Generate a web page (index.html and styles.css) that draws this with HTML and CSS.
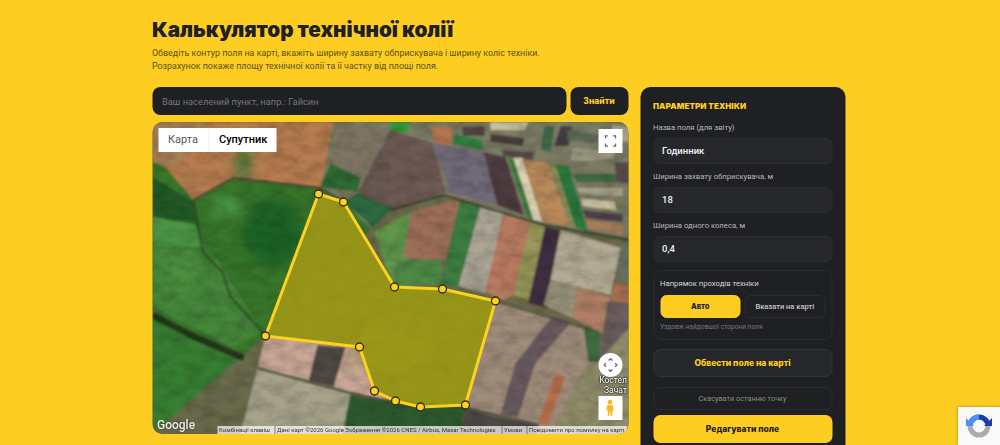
FILE: index.html
```html
<!DOCTYPE html>
<html lang="uk">

<head>
    <meta charset="UTF-8">
    <meta name="viewport" content="width=device-width, initial-scale=1.0">
    <title>Калькулятор технічної колії</title>
    <link rel="stylesheet" href="styles.css">
</head>

<body>
    <div class="page">
        <h1>Калькулятор технічної колії</h1>
        <p class="intro">Обведіть контур поля на карті, вкажіть ширину захвату обприскувача і ширину коліс техніки.<br>Розрахунок покаже площу технічної колії та її частку від площі поля.</p>

        <div class="layout">
            <div class="left-col">
                <div class="search-row">
                    <input class="search-input" type="text" placeholder="Ваш населений пункт, напр.: Гайсин">
                    <button class="search-btn">Знайти</button>
                </div>

                <div class="map">
                    <svg class="map-canvas" viewBox="0 0 477 312" width="477" height="312">
                        <defs>
                            <filter id="soft"><feGaussianBlur stdDeviation="1" /></filter>
                            <filter id="mottle" x="-20%" y="-20%" width="140%" height="140%"><feGaussianBlur stdDeviation="6" /></filter>
                            <filter id="grain" x="0" y="0" width="100%" height="100%">
                                <feTurbulence type="fractalNoise" baseFrequency="0.06 0.1" numOctaves="4" seed="7" />
                                <feColorMatrix type="matrix" values="0 0 0 0 0  0 0 0 0 0  0 0 0 0 0  1.6 0 0 0 -0.55" />
                            </filter>
                        </defs>
                        <g filter="url(#soft)">
                            <rect width="477" height="312" fill="#7d7a62" />
                            <!-- top left -->
                            <polygon points="0,0 181,0 168,66 81,56 41,78 13,45 0,40" fill="#b67c50" />
                            <polygon points="0,0 60,0 30,40 13,45 0,40" fill="#a88058" />
                            <polygon points="181,41 188,0 238,0 215,55" fill="#7f7465" />
                            <polygon points="168,65 178,41 208,56 205,70" fill="#2f6a32" />
                            <polygon points="205,71 238,8 280,21 293,70 245,88 215,100" fill="#6b5853" />
                            <polygon points="191,80 205,71 245,88 222,110 215,100" fill="#2e6a42" />
                            <!-- green block on the left -->
                            <polygon points="0,40 13,45 41,78 81,56 168,66 191,80 222,110 113,214 105,246 88,312 0,312" fill="#38762c" />
                            <polygon points="0,55 41,80 44,100 0,95" fill="#245a28" />
                            <polygon points="0,95 44,103 50,125 0,125" fill="#4c9444" />
                            <polygon points="0,125 60,130 110,210 80,225 0,185" fill="#44863a" />
                            <polygon points="0,198 95,240 88,312 0,312" fill="#387e30" />
                            <!-- strips of small plots along the top -->
                            <polygon points="188,0 477,0 477,22 420,40 353,35 280,21 238,8" fill="#7c7d65" />
                            <polygon points="238,0 258,0 254,12 238,8" fill="#2f9a3a" />
                            <polygon points="278,5 300,5 298,24 282,21" fill="#b5754f" />
                            <polygon points="310,5 332,4 332,14 310,14" fill="#55453f" />
                            <polygon points="338,0 376,0 372,8 338,8" fill="#c8bfa0" />
                            <polygon points="302,12 330,18 330,28 300,22" fill="#2e8040" />
                            <polygon points="338,12 372,16 370,24 338,20" fill="#4a3c3e" />
                            <polygon points="350,28 382,30 380,38 350,34" fill="#5b4a48" />
                            <polygon points="392,4 402,4 398,30 388,28" fill="#3e6a4a" />
                            <polygon points="408,4 420,4 416,24 402,24" fill="#4a3c44" />
                            <polygon points="415,8 458,14 456,22 415,18" fill="#5b6a56" />
                            <polygon points="420,26 462,30 460,42 418,38" fill="#9c9a82" />
                            <polygon points="460,2 477,6 477,20 458,18" fill="#ada68c" />
                            <!-- big fields in the middle -->
                            <polygon points="238,8 280,21 293,70 245,88 238,86" fill="#6e5a52" />
                            <polygon points="280,21 331,30 345,83 298,71" fill="#6f6b79" />
                            <polygon points="331,30 353,35 371,93 345,83" fill="#4f3d40" />
                            <polygon points="355,35 361,36 381,98 375,95" fill="#3a7f3f" />
                            <polygon points="361,36 370,36 390,100 381,98" fill="#dcd2b2" />
                            <polygon points="370,38 395,41 418,105 390,100" fill="#b98a5a" />
                            <polygon points="395,41 405,43 423,105 418,105" fill="#8a8a5a" />
                            <polygon points="403,43 416,43 436,111 423,105" fill="#2b7a3e" />
                            <!-- plots on the right edge -->
                            <polygon points="416,40 477,36 477,118 436,111" fill="#7a7c62" />
                            <polygon points="420,52 470,52 472,60 424,60" fill="#3f6d45" />
                            <polygon points="424,66 470,66 470,74 428,72" fill="#a8a186" />
                            <polygon points="428,76 462,80 464,88 430,84" fill="#c9c0a0" />
                            <polygon points="430,88 470,92 470,100 434,96" fill="#4d3f4a" />
                            <polygon points="432,97 470,103 470,112 436,106" fill="#a87c58" />
                            <polygon points="462,40 477,40 477,62 464,60" fill="#5a4c48" />
                            <!-- below the road -->
                            <polygon points="238,88 291,73 391,103 478,118 478,312 0,312 113,214" fill="#6b6a4c" />
                            <polygon points="222,110 258,91 258,165 240,165" fill="#5f9648" />
                            <polygon points="258,91 308,76 293,138 251,136" fill="#9d6f58" />
                            <polygon points="245,138 290,138 288,163 240,163" fill="#4f8a44" />
                            <polygon points="308,78 328,84 306,165 288,163" fill="#3d7d42" />
                            <polygon points="328,84 351,91 333,171 306,164" fill="#aba595" />
                            <polygon points="351,91 378,99 361,173 351,178 333,170" fill="#b77a5e" />
                            <polygon points="378,99 393,104 376,178 361,173" fill="#98985a" />
                            <polygon points="393,104 408,108 395,186 376,181" fill="#3f2f3f" />
                            <polygon points="408,108 468,126 458,173 425,165 398,158" fill="#b2aa92" />
                            <polygon points="398,158 425,165 420,196 391,183" fill="#97937a" />
                            <polygon points="425,165 458,175 450,211 420,196" fill="#b07f66" />
                            <polygon points="468,126 477,120 477,160 462,160" fill="#69705f" />
                            <polygon points="462,160 477,165 477,182 458,178" fill="#aa7050" />
                            <polygon points="455,180 477,181 477,235 447,235" fill="#6c6061" />
                            <!-- bottom right -->
                            <polygon points="343,179 438,208 445,240 431,248 398,312 308,312 313,283" fill="#a08c7a" />
                            <polygon points="401,193 418,201 383,241 365,296 348,293 363,241" fill="#6a5a60" />
                            <polygon points="403,251 413,255 395,303 386,301" fill="#b56e4a" />
                            <polygon points="431,205 447,209 447,240 436,240" fill="#3f6a40" />
                            <polygon points="445,240 477,205 477,312 398,312 431,248" fill="#8f8c6a" />
                            <!-- bottom left -->
                            <polygon points="113,214 207,225 222,269 238,278 198,271 156,260 105,246" fill="#c8a794" />
                            <polygon points="165,223 193,225 181,265 156,260" fill="#4f4a42" />
                            <polygon points="105,246 198,271 190,312 88,312" fill="#a6a38a" />
                            <polygon points="198,273 241,281 313,286 308,312 190,312" fill="#2e5a2e" />
                            <polygon points="313,286 338,293 386,303 386,312 308,312" fill="#4f4a45" />
                            <!-- field under the contour -->
                            <polygon points="166,72 191,80 242,165 290,167 343,179 313,283 268,285 243,279 222,269 207,225 113,214" fill="#5b6a1e" />
                        </g>
                        <!-- soft patches inside the crops -->
                        <g filter="url(#mottle)">
                            <ellipse cx="91" cy="41" rx="8" ry="18" fill="#4f7a3a" />
                            <ellipse cx="120" cy="110" rx="30" ry="34" fill="#1f6428" />
                            <ellipse cx="75" cy="85" rx="18" ry="10" fill="#4c9644" />
                            <ellipse cx="30" cy="150" rx="14" ry="26" fill="#4c9040" />
                            <ellipse cx="240" cy="225" rx="40" ry="26" fill="#6f7a22" opacity="0.5" />
                        </g>
                        <!-- hedges and roads -->
                        <g filter="url(#soft)">
                            <polyline class="hedge-wide" points="0,193 40,214 91,236" />
                            <polyline class="hedge" points="41,78 81,56 168,66 191,80" />
                            <polyline class="hedge" points="48,118 50,130 70,150 78,175 112,212" />
                            <polyline class="hedge" points="41,78 48,118" />
                            <polyline class="hedge" points="238,88 291,73 391,103 478,118" />
                            <polyline class="hedge" points="105,246 198,271 241,281 313,286 386,303" />
                            <polyline class="hedge-thin" points="343,179 438,208" />
                        </g>
                        <rect width="477" height="312" filter="url(#grain)" opacity="0.2" />

                        <polygon class="contour" points="166,72 191,80 242,165 290,167 343,179 313,283 268,285 243,279 222,269 207,225 113,214" />
                        <g class="vertices">
                            <circle cx="166" cy="72" r="4" />
                            <circle cx="191" cy="80" r="4" />
                            <circle cx="242" cy="165" r="4" />
                            <circle cx="290" cy="167" r="4" />
                            <circle cx="343" cy="179" r="4" />
                            <circle cx="313" cy="283" r="4" />
                            <circle cx="268" cy="285" r="4" />
                            <circle cx="243" cy="279" r="4" />
                            <circle cx="222" cy="269" r="4" />
                            <circle cx="207" cy="225" r="4" />
                            <circle cx="113" cy="214" r="4" />
                        </g>
                    </svg>

                    <div class="map-type">
                        <span class="map-type-item">Карта</span>
                        <span class="map-type-item active">Супутник</span>
                    </div>

                    <div class="fullscreen">
                        <svg viewBox="0 0 14 14" width="12" height="12">
                            <path d="M1 4V1h3M10 1h3v3M13 10v3h-3M4 13H1v-3" fill="none" stroke="#666" stroke-width="1.7" />
                        </svg>
                    </div>

                    <div class="camera">
                        <svg viewBox="0 0 24 24" width="18" height="18">
                            <path d="M9.5 6 12 3.500 14.500 6M9.500 18l2.500 2.500 2.500-2.500M6 9.500 3.500 12 6 14.500M18 9.500l2.500 2.500-2.500 2.500" fill="none" stroke="#666" stroke-width="1.7" />
                        </svg>
                    </div>

                    <div class="place-label">Костел<br>Зачат</div>

                    <div class="pegman">
                        <svg viewBox="0 0 14 22" width="11" height="18">
                            <circle cx="7" cy="3.6" r="3" fill="#f5b91e" />
                            <path d="M3.4 7.4h7.2l1.2 6.6h-1.7v7H7.7v-5H6.3v5H4.100v-7H2.200z" fill="#f5b91e" />
                        </svg>
                    </div>

                    <div class="google-logo">Google</div>

                    <div class="attribution">
                        <span class="attr-item attr-keys">Комбінації клавіш</span>
                        <span class="attr-item attr-data">Дані карт ©2026 Google Зображення ©2026 CNES / Airbus, Maxar Technologies</span>
                        <span class="attr-item attr-terms">Умови</span>
                        <span class="attr-item attr-report">Повідомити про помилку на карті</span>
                    </div>
                </div>
            </div>

            <div class="panel">
                <h2>Параметри техніки</h2>

                <label class="field-label">Назва поля (для звіту)</label>
                <div class="field-value">Годинник</div>

                <label class="field-label">Ширина захвату обприскувача, м</label>
                <div class="field-value">18</div>

                <label class="field-label">Ширина одного колеса, м</label>
                <div class="field-value">0,4</div>

                <div class="direction">
                    <div class="direction-title">Напрямок проходів техніки</div>
                    <div class="direction-btns">
                        <button class="dir-btn active">Авто</button>
                        <button class="dir-btn">Вказати на карті</button>
                    </div>
                    <div class="direction-hint">Уздовж найдовшої сторони поля</div>
                </div>

                <button class="btn-outline">Обвести поле на карті</button>
                <button class="btn-ghost">Скасувати останню точку</button>
                <button class="btn-primary">Редагувати поле</button>
            </div>
        </div>
    </div>

    <div class="recaptcha">
        <svg viewBox="0 0 28 28" width="28" height="28">
            <path d="M5 14a9 9 0 0 1 18 0" fill="none" stroke="#1c3aa9" stroke-width="5" />
            <path d="M14 5a9 9 0 0 0-9 9" fill="none" stroke="#4a90f5" stroke-width="5" />
            <path d="M23 14a9 9 0 0 1-18 0" fill="none" stroke="#ababab" stroke-width="5" />
            <path d="M1 6v8h8z" fill="#4a90f5" />
            <path d="M27 6v8h-8z" fill="#1c3aa9" />
        </svg>
    </div>
</body>

</html>
```

FILE: styles.css
```css
html,
body {
    height: 445px;
    overflow: hidden;
}

body {
    margin: 0;
    padding: 0;
    font-family: Roboto, "Noto Sans", sans-serif;
    background-color: #fdcd22;
    color: #1f2024;
}

.page {
    width: 693px;
    margin: 0 auto;
    padding-top: 17px;
    transform: translateX(-1.5px);
}

h1 {
    margin: 0;
    font-family: Inter, sans-serif;
    font-size: 20.7px;
    line-height: 26px;
    font-weight: 900;
}

.intro {
    margin: 3.5px 0 0;
    font-size: 8.9px;
    line-height: 13.3px;
    font-weight: 400;
    color: #5f4f16;
}

.layout {
    display: flex;
    gap: 12px;
    margin-top: 14px;
    align-items: flex-start;
}

.left-col {
    width: 476px;
}

.search-row {
    display: flex;
    gap: 4px;
}

.search-input {
    flex: 1;
    min-width: 0;
    height: 28px;
    box-sizing: border-box;
    padding: 0 10px;
    border: none;
    border-radius: 8px;
    background-color: #1f2024;
    color: #fff;
    font-family: inherit;
    font-size: 9.3px;
}

.search-input::placeholder {
    color: #77787a;
    opacity: 1;
}

.search-btn {
    width: 58px;
    height: 28px;
    border: none;
    border-radius: 8px;
    background-color: #1f2024;
    color: #fdcd22;
    font-family: Inter, sans-serif;
    font-size: 8.5px;
    font-weight: 800;
}

/* map */
.map {
    position: relative;
    width: 476px;
    height: 312px;
    margin-top: 7px;
    border-radius: 10px;
    overflow: hidden;
    background-color: #6b6a4c;
}

.map-canvas {
    display: block;
}

.hedge,
.hedge-wide,
.hedge-thin {
    fill: none;
    stroke: #2c3a24;
}

.hedge {
    stroke-width: 1.4;
}

.hedge-wide {
    stroke-width: 6;
    stroke: #26341f;
}

.hedge-thin {
    stroke-width: 1;
}

.contour {
    fill: #bcb016;
    fill-opacity: 0.62;
    stroke: #fdd21f;
    stroke-width: 3;
    stroke-linejoin: round;
}

.vertices circle {
    fill: #fdd21f;
    stroke: #33300f;
    stroke-width: 1.4;
}

.map-type {
    position: absolute;
    top: 6px;
    left: 6px;
    display: flex;
    height: 24px;
    background-color: #fff;
    font-size: 11px;
    line-height: 24px;
}

.map-type-item {
    padding: 0 10px;
    color: #565656;
}

.map-type-item.active {
    padding-right: 9px;
    border-left: 1px solid #eee;
    color: #000;
    font-weight: 500;
}

.fullscreen,
.pegman {
    position: absolute;
    left: 446px;
    width: 24px;
    height: 24px;
    display: flex;
    align-items: center;
    justify-content: center;
    background-color: #fff;
}

.fullscreen {
    top: 7px;
}

.pegman {
    top: 274px;
}

.camera {
    position: absolute;
    top: 231px;
    left: 446px;
    width: 24px;
    height: 24px;
    display: flex;
    align-items: center;
    justify-content: center;
    border-radius: 50%;
    background-color: #fff;
}

.place-label {
    position: absolute;
    top: 254px;
    right: 1px;
    text-align: right;
    white-space: nowrap;
    color: #fff;
    font-size: 8.5px;
    line-height: 9.5px;
    text-shadow: 0 0 2px #000, 0 0 2px #000;
}

.google-logo {
    position: absolute;
    left: 5px;
    bottom: 1px;
    color: #eee;
    font-size: 12px;
    font-weight: 500;
    line-height: 15px;
    text-shadow: 0 0 2px rgba(0, 0, 0, 0.5);
}

.attribution {
    position: absolute;
    left: 65px;
    right: 1px;
    bottom: 0;
    height: 8px;
    display: flex;
    background-color: rgba(255, 255, 255, 0.7);
    font-size: 6px;
    line-height: 8px;
    color: #333;
    white-space: nowrap;
}

.attr-item {
    box-sizing: border-box;
    padding-left: 2px;
    border-right: 1px solid #777;
    overflow: hidden;
}

.attr-keys {
    width: 58px;
}

.attr-data {
    width: 227px;
}

.attr-terms {
    width: 25px;
}

.attr-report {
    flex: 1;
    border-right: none;
}

/* side panel */
.panel {
    flex: none;
    width: 205px;
    box-sizing: border-box;
    padding: 14px 13px;
    border-radius: 10px;
    background-color: #1f2024;
    color: #ccc;
}

.panel h2 {
    margin: 0 0 12px;
    font-family: Inter, sans-serif;
    font-size: 8px;
    line-height: 10px;
    font-weight: 900;
    text-transform: uppercase;
    letter-spacing: 0.1px;
    color: #fdcd22;
}

.field-label {
    display: block;
    margin-bottom: 5px;
    font-size: 7.7px;
    line-height: 10px;
    font-weight: 400;
    color: #b9b9b9;
}

.field-value {
    height: 26px;
    box-sizing: border-box;
    margin-bottom: 8px;
    padding: 0 8px;
    border: 1px solid #2c2d31;
    border-radius: 6px;
    background-color: #26272b;
    color: #f3f3f3;
    font-size: 9.5px;
    line-height: 24px;
    font-weight: 500;
}

.direction {
    height: 70px;
    box-sizing: border-box;
    padding: 8px 6px;
    border: 1px solid #2c2d31;
    border-radius: 8px;
}

.direction-title {
    font-size: 7.7px;
    line-height: 10px;
    font-weight: 400;
    color: #d6d6d6;
}

.direction-btns {
    display: flex;
    gap: 4px;
    margin-top: 6px;
}

.dir-btn {
    flex: 1;
    height: 23px;
    padding: 0;
    border: 1px solid #2c2d31;
    border-radius: 6px;
    background-color: transparent;
    color: #c9c9c9;
    font-family: inherit;
    font-size: 7.5px;
    font-weight: 500;
}

.dir-btn.active {
    border-color: #fdcd22;
    background-color: #fdcd22;
    color: #1f2024;
    font-family: Inter, sans-serif;
    font-weight: 800;
}

.direction-hint {
    margin-top: 5px;
    font-size: 6.6px;
    line-height: 9px;
    color: #77787a;
}

.btn-outline,
.btn-ghost,
.btn-primary {
    display: block;
    width: 100%;
    box-sizing: border-box;
    font-family: Inter, sans-serif;
}

.btn-outline {
    height: 28px;
    margin-top: 9px;
    border: 1px solid #333438;
    border-radius: 7px;
    background-color: #26272b;
    color: #fdcd22;
    font-size: 8.5px;
    font-weight: 800;
}

.btn-ghost {
    height: 23px;
    margin-top: 10px;
    border: 1px solid #2c2d31;
    border-radius: 6px;
    background-color: transparent;
    color: #8b8c8e;
    font-family: Roboto, sans-serif;
    font-size: 7.3px;
}

.btn-primary {
    height: 28px;
    margin-top: 5px;
    border: none;
    border-radius: 7px;
    background-color: #fdcd22;
    color: #1f2024;
    font-size: 8.5px;
    font-weight: 800;
}

/* recaptcha badge */
.recaptcha {
    position: fixed;
    right: 0;
    bottom: 0;
    width: 42px;
    height: 38px;
    display: flex;
    align-items: center;
    justify-content: center;
    background-color: #f9f9f9;
    box-shadow: 0 0 3px rgba(0, 0, 0, 0.35);
}
```
